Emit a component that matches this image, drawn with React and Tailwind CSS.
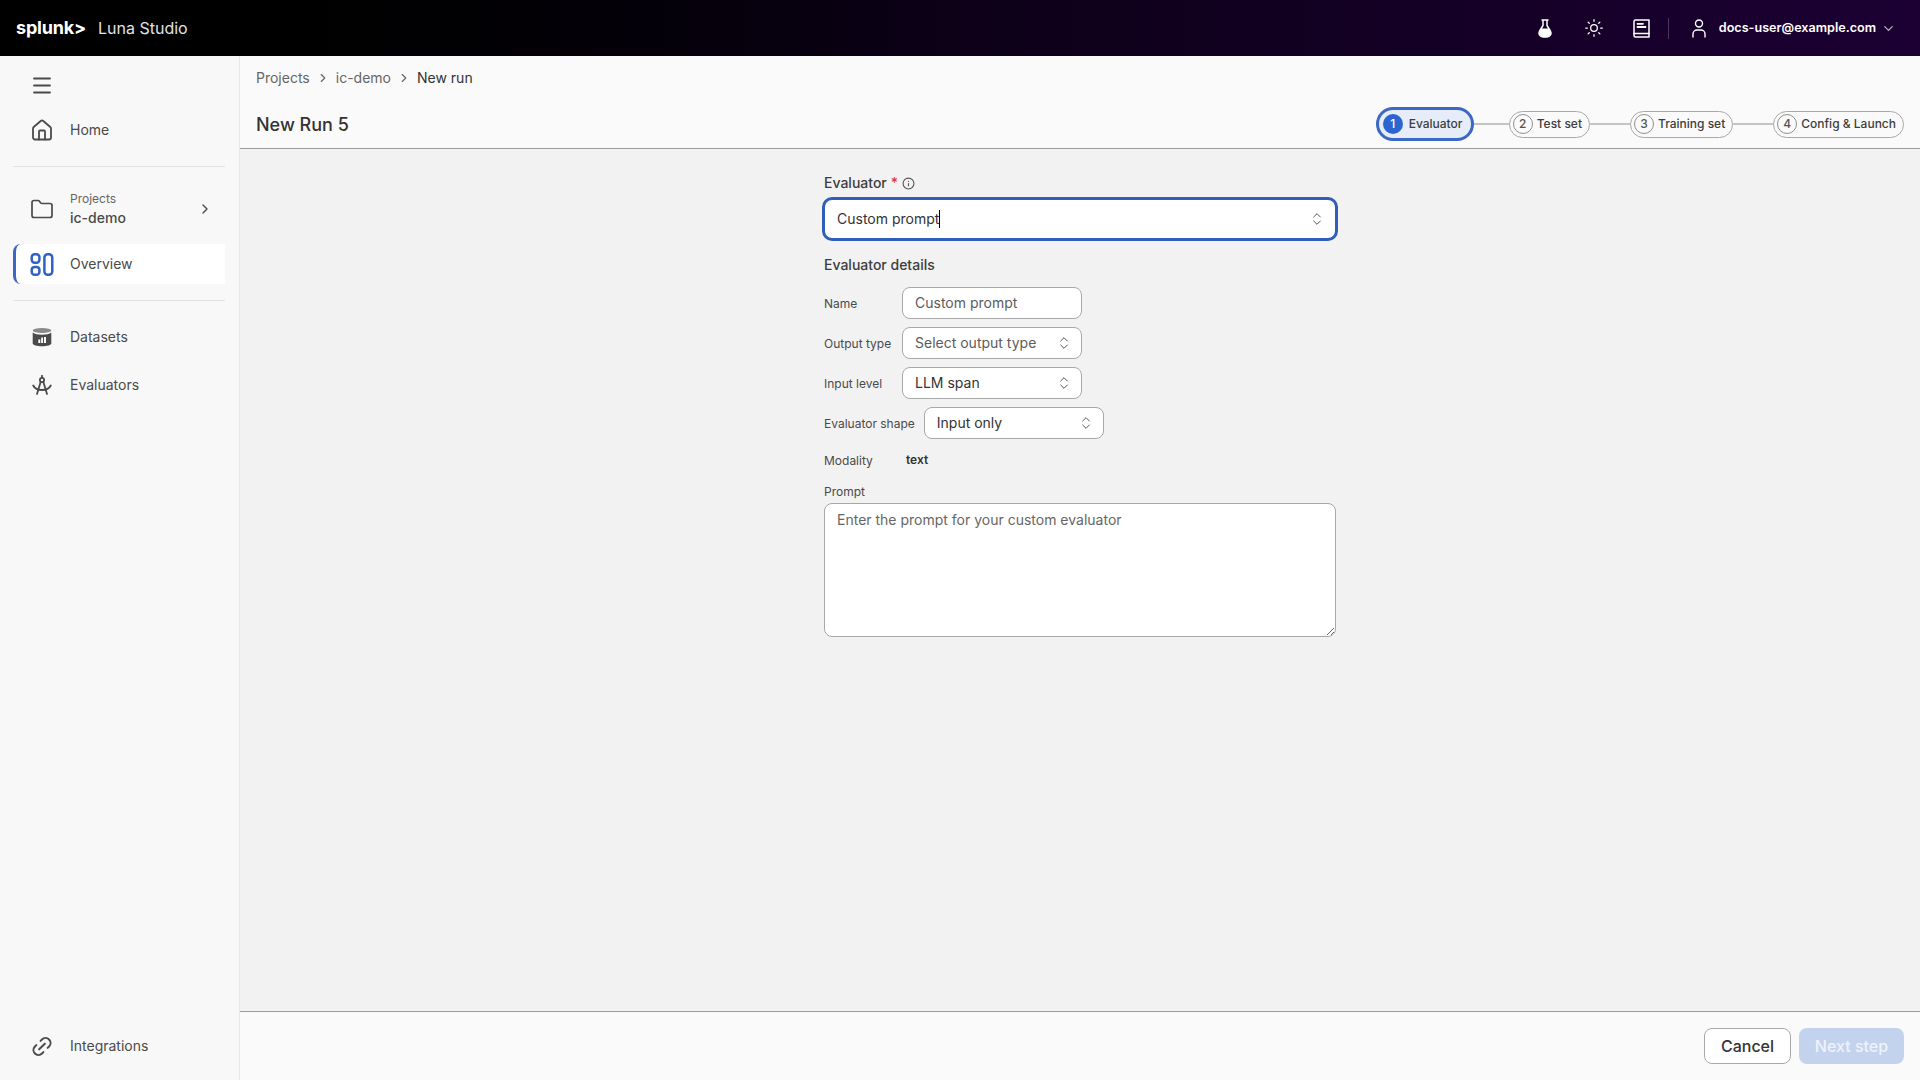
import React from "react";
import { ChevronDown, ChevronRight, ChevronsUpDown, Folder, House, Info, Link2, Menu, Sun } from "lucide-react";

const font = { fontFamily: "Inter, sans-serif" };

const FlaskIcon = () => (
  <svg width="14" height="19" viewBox="0 0 14 19" fill="none">
    <path d="M4 1h6M5 1v5.500L1.600 12c-1.500 2.600.2 6 3.400 6h4c3.200 0 4.900-3.400 3.400-6L9 6.500V1" stroke="white" strokeWidth="1.500" strokeLinecap="round" strokeLinejoin="round" />
    <path d="M3.500 9.500h7l2 3.500c1 2.200-.5 5-3.500 5H5c-3 0-4.500-2.800-3.500-5z" fill="white" />
  </svg>
);

const BookIcon = () => (
  <svg width="17" height="19" viewBox="0 0 17 19" fill="none" stroke="white" strokeWidth="1.500" strokeLinecap="round" strokeLinejoin="round">
    <path d="M1 15.500V2.500A1.500 1.500 0 0 1 2.500 1H16v17H2.500A1.500 1.500 0 0 1 1 16.500z" />
    <path d="M1 14.500h15" />
    <path d="M4.500 4.800h5.500M4.500 8h8" strokeWidth="1.800" />
  </svg>
);

const UserIcon = () => (
  <svg width="14" height="19" viewBox="0 0 14 19" fill="none" stroke="white" strokeWidth="1.400" strokeLinecap="round">
    <circle cx="7" cy="4.500" r="3.500" />
    <path d="M1 18v-3a4 4 0 0 1 4-4h4a4 4 0 0 1 4 4v3" />
  </svg>
);

const OverviewIcon = () => (
  <svg width="25" height="25" viewBox="0 0 25 25" fill="none" stroke="#2f62c4" strokeWidth="2.600">
    <rect x="1.800" y="1.800" width="8" height="8.800" rx="3" />
    <rect x="1.800" y="15" width="8" height="8.200" rx="3" />
    <rect x="15" y="1.800" width="8.200" height="21.400" rx="3.500" />
  </svg>
);

const DatasetIcon = () => (
  <svg width="20" height="20" viewBox="0 0 20 20">
    <ellipse cx="10" cy="3.500" rx="9.300" ry="2.500" fill="#8a8a8a" />
    <path d="M.7 5.500c1.600 1.600 5.300 2.200 9.300 2.200s7.700-.6 9.300-2.200V16.500c0 1.600-4.300 2.800-9.300 2.800S.7 18.100.7 16.500z" fill="#4a4a4a" />
    <path d="M6.300 12.500h2v3.500h-2zM9.200 10.500h1.800v5.500H9.200zM12 10h2v6h-2z" fill="white" />
  </svg>
);

const CompassIcon = () => (
  <svg width="20" height="20" viewBox="0 0 20 20" fill="none" stroke="#4a4a4a" strokeWidth="1.800" strokeLinecap="round" strokeLinejoin="round">
    <path d="M10 .8v2" />
    <circle cx="10" cy="5" r="2.100" />
    <path d="M8.700 6.800 5 19M11.300 6.800 15 19" />
    <path d="M1.200 10.500c1.400 2.800 4.800 4.500 8.800 4.500s7.400-1.700 8.800-4.500" />
  </svg>
);

const NavRow = ({ icon, label }) => (
  <div className="flex h-12 items-center gap-4 pl-[17px] text-sm text-[#4a4a4a]">
    <span className="flex w-6 justify-center">{icon}</span>
    <span>{label}</span>
  </div>
);

const Step = ({ n, label, active }) =>
  active ? (
    <div className="flex h-[34px] w-[98px] items-center gap-1.5 rounded-full border-[3px] border-[#3a68c4] bg-[#e6ecf8] pl-[4px] text-xs font-medium text-[#3d3d3d]">
      <span className="flex h-5 w-5 items-center justify-center rounded-full bg-[#2b65d0] text-white">{n}</span>
      {label}
    </div>
  ) : (
    <div className="flex h-[27px] items-center gap-1 rounded-full border border-[#a8a8a8] bg-[#fafafa] pr-[7px] pl-[3px] text-xs font-medium text-[#3d3d3d]">
      <span className="flex h-5 w-5 items-center justify-center rounded-full border border-[#8f8f8f] text-[#555]">{n}</span>
      {label}
    </div>
  );

const Connector = ({ w }) => <div className={`h-[2px] bg-[#c4c4c4] ${w}`} />;

const Field = ({ label, children }) => (
  <div className="flex items-center gap-[9px]">
    <span className="min-w-[69px] pt-[2px] text-xs text-[#4a4a4a]">{label}</span>
    {children}
  </div>
);

const SmallSelect = ({ value, muted }) => (
  <div className={`flex h-8 w-[180px] items-center justify-between rounded-lg border border-[#a8a8a8] bg-white pr-[9px] pl-3 text-sm ${muted ? "text-[#5c5c5c]" : "text-[#333]"}`}>
    {value}
    <ChevronsUpDown size={16} strokeWidth={1.5} className="text-[#555]" />
  </div>
);

export default function App() {
  return (
    <div className="flex h-screen flex-col overflow-hidden bg-[#f2f2f2] text-[#333]" style={font}>
      <header className="flex h-[56px] shrink-0 items-center justify-between bg-gradient-to-r from-black via-[#0d0018] to-[#1c0034] pr-[24px] pl-4 text-white">
        <div className="flex items-center gap-3">
          <span className="text-lg font-bold tracking-[-0.2px]">splunk&gt;</span>
          <span className="text-base text-[#e2e2e2]">Luna Studio</span>
        </div>
        <div className="flex items-center">
          <FlaskIcon />
          <Sun size={20} strokeWidth={1.5} className="ml-[32px]" />
          <span className="ml-[29px]"><BookIcon /></span>
          <span className="ml-[18px] h-[21px] w-px bg-[#47375a]" />
          <span className="ml-[23px]"><UserIcon /></span>
          <span className="ml-[13px] text-[12.600px] font-semibold">docs-user@example.com</span>
          <ChevronDown size={15} className="ml-[5px] text-[#b9b0c4]" />
        </div>
      </header>

      <div className="flex min-h-0 flex-1">
        <aside className="flex w-[240px] shrink-0 flex-col border-r border-[#e8e8e8] bg-[#f8f8f8] pt-2 pr-[14px] pb-[10px] pl-[13px]">
          <div className="flex h-[42px] items-center pl-[17px]">
            <span className="flex w-6 justify-center"><Menu size={27} strokeWidth={1.800} className="text-[#4a4a4a]" /></span>
          </div>
          <NavRow icon={<House size={25} strokeWidth={1.800} />} label="Home" />
          <div className="mt-3 h-px bg-[#e2e2e2]" />
          <div className="mt-[18px] flex h-12 items-center gap-4 pr-3 pl-[17px] text-[#4a4a4a]">
            <span className="flex w-6 justify-center"><Folder size={27} strokeWidth={1.700} /></span>
            <div className="flex-1">
              <div className="text-xs leading-4 text-[#666]">Projects</div>
              <div className="pt-[1px] text-sm leading-5 font-medium">ic-demo</div>
            </div>
            <ChevronRight size={16} />
          </div>
          <div className="mt-[11px] flex h-10 items-center gap-4 rounded-l-lg border-l-[3px] border-[#3a68c4] bg-white pl-[14px] text-sm text-[#4a4a4a]">
            <span className="flex w-6 justify-center"><OverviewIcon /></span>
            Overview
          </div>
          <div className="mt-4 mb-[12px] h-px bg-[#e2e2e2]" />
          <NavRow icon={<DatasetIcon />} label="Datasets" />
          <NavRow icon={<CompassIcon />} label="Evaluators" />
          <div className="mt-auto">
            <NavRow icon={<Link2 size={25} strokeWidth={2} className="-rotate-45" />} label="Integrations" />
          </div>
        </aside>

        <main className="flex min-w-0 flex-1 flex-col">
          <div className="shrink-0 border-b border-[#999] bg-[#fafafa] pr-4 pb-px pl-4">
            <div className="flex h-[45px] items-center gap-1.5 pb-px text-sm text-[#666]">
              <span>Projects</span>
              <ChevronRight size={14} />
              <span>ic-demo</span>
              <ChevronRight size={14} />
              <span className="text-[#333]">New run</span>
            </div>
            <div className="flex h-[46px] items-center justify-between">
              <h1 className="pt-px text-lg font-medium text-[#333]">New Run 5</h1>
              <div className="flex items-center">
                <Step n="1" label="Evaluator" active />
                <Connector w="w-[35px]" />
                <Step n="2" label="Test set" />
                <Connector w="w-[40px]" />
                <Step n="3" label="Training set" />
                <Connector w="w-[40px]" />
                <Step n="4" label="Config & Launch" />
              </div>
            </div>
          </div>

          <div className="min-h-0 flex-1 pt-6">
            <div className="mx-auto flex w-[512px] flex-col">
              <div className="flex h-5 items-center gap-1 text-sm font-medium text-[#3d3d3d]">
                Evaluator <span className="text-[#d93a3a]">*</span>
                <Info size={13} className="text-[#555]" />
              </div>
              <div className="-mx-[2px] mt-1 flex h-[44px] items-center rounded-[10px] border-[3px] border-[#2f5fb8] bg-white pr-[10px] pl-3 text-sm text-[#333]">
                <span>Custom prompt</span>
                <span className="h-[18px] w-px bg-black" />
                <ChevronsUpDown size={16} strokeWidth={1.5} className="ml-auto text-[#555]" />
              </div>
              <div className="mt-[14px] text-sm font-medium text-[#3d3d3d]">Evaluator details</div>
              <div className="mt-[12px] flex flex-col gap-2">
                <Field label="Name">
                  <div className="flex h-8 w-[180px] items-center rounded-lg border border-[#a8a8a8] bg-white px-3 text-sm text-[#5c5c5c]">Custom prompt</div>
                </Field>
                <Field label="Output type"><SmallSelect value="Select output type" muted /></Field>
                <Field label="Input level"><SmallSelect value="LLM span" /></Field>
                <Field label="Evaluator shape"><SmallSelect value="Input only" /></Field>
              </div>
              <div className="mt-3 flex h-5 items-center gap-[12px] text-xs text-[#4a4a4a]">
                <span className="w-[70px]">Modality</span>
                <span className="-mt-0.5 font-semibold text-[#333]">text</span>
              </div>
              <div className="mt-[13px] text-xs leading-4 text-[#4a4a4a]">Prompt</div>
              <textarea
                className="mt-[3px] h-[134px] w-full rounded-lg border border-[#a8a8a8] bg-white px-3 py-1.5 text-sm placeholder:text-[#666]"
                placeholder="Enter the prompt for your custom evaluator"
              />
            </div>
          </div>

          <div className="flex h-[69px] shrink-0 items-center justify-end gap-2 border-t border-[#999] bg-[#fafafa] pr-4">
            <button className="h-9 w-[87px] rounded-lg border border-[#a8a8a8] bg-white text-base font-medium text-[#333]">Cancel</button>
            <button className="h-9 w-[105px] rounded-lg bg-[#c3d3ee] text-base font-medium text-[#eef2fa]">Next step</button>
          </div>
        </main>
      </div>
    </div>
  );
}
